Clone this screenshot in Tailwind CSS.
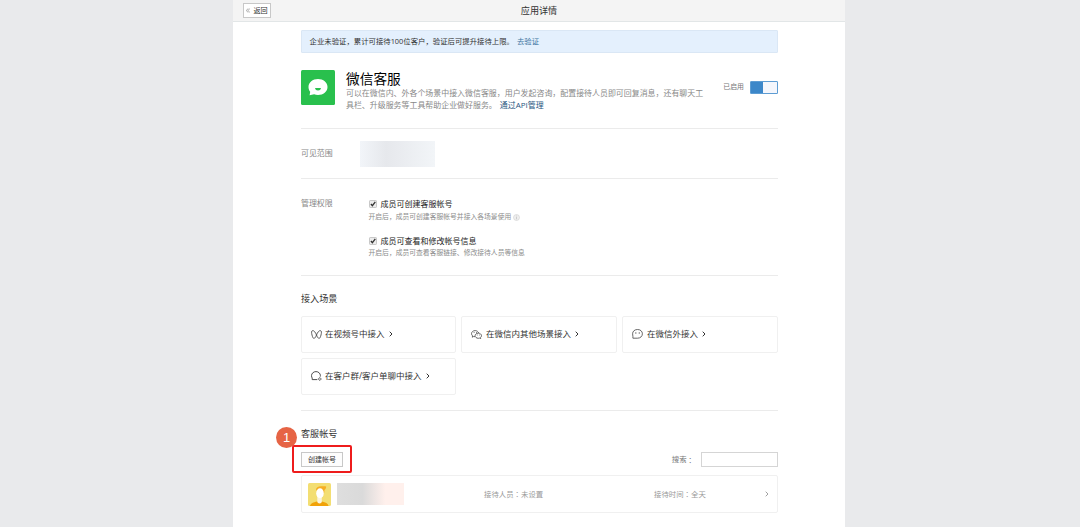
<!DOCTYPE html>
<html lang="zh-CN">
<head>
  <meta charset="UTF-8">
  <meta name="viewport" content="width=device-width, initial-scale=1.0">
  <title>应用详情</title>
  <script src="https://cdn.jsdelivr.net/npm/@tailwindcss/browser@4"></script>
</head>
<body class="bg-[#e9eaec] h-[527px] overflow-hidden font-['Open_Sans','Noto_Sans_CJK_SC',sans-serif] text-[#333]">
  <main class="ml-[233px] w-[612px] h-[527px] bg-white overflow-hidden">
    <!-- Top bar -->
    <header class="grid grid-cols-3 items-center h-[22px] bg-[#f4f4f4] border-b border-[#e2e6e7] px-[10px]">
      <button class="flex items-center justify-center gap-[3px] w-[28px] h-[15px] bg-white border border-[#c8c8c8] text-[7.1px] leading-none">
        <svg class="w-[4px] h-[5px]" viewBox="0 0 4 5" fill="none" stroke="#777" stroke-width=".6"><path d="M2 .5.5 2.5 2 4.5M3.7.5 2.2 2.5 3.7 4.5"/></svg>返回
      </button>
      <h1 class="text-center text-[9.1px] leading-none">应用详情</h1>
    </header>

    <div class="ml-[68px] w-[477px]">
      <!-- Notice -->
      <div class="flex items-center h-[23px] mt-2 pl-[7.5px] bg-[#e4f0fd] border border-[#dae7f5] rounded-[1px] text-[7.38px] leading-none whitespace-nowrap">
        <span>企业未验证，累计可接待100位客户，验证后可提升接待上限。</span>
        <a class="ml-[3px] text-[#3b73a0]">去验证</a>
      </div>

      <!-- App info -->
      <section class="flex h-[76px] pt-[17px] border-b border-[#ebebeb]">
        <svg class="w-[34px] h-[35px] shrink-0" viewBox="0 0 34 35" preserveAspectRatio="none">
          <rect width="34" height="35" rx="1.5" fill="#29c04d"/>
          <path d="M17 9c5.300 0 9.500 3.500 9.500 8s-4.200 8-9.500 8c-1.500 0-2.700-.2-3.900-.7L8.600 25.300l.6-3.500C8 20.500 7.500 18.800 7.500 17c0-4.500 4.200-8 9.500-8z" fill="#fff"/>
          <path d="M14 18h6c-.3 1.700-1.400 2.500-3 2.500s-2.700-.8-3-2.500z" fill="#29c04d"/>
        </svg>
        <div class="ml-[11px] w-[362px] whitespace-nowrap">
          <h2 class="mt-[2px] text-[13.7px] leading-[14px] text-black">微信客服</h2>
          <p class="mt-[2px] text-[7.95px] leading-[11.500px] text-[#888]">可以在微信内、外各个场景中接入微信客服，用户发起咨询，配置接待人员即可回复消息，还有聊天工<br>具栏、升级服务等工具帮助企业做好服务。<a class="ml-[3px] text-[#1f5580]">通过API管理</a></p>
        </div>
        <div class="ml-auto flex items-center h-[35px] gap-[6px]">
          <span class="text-[6.9px] leading-none text-[#777]">已启用</span>
          <span class="flex justify-end w-[28px] h-[13px] bg-[#3c87c9] border border-[#5d9cd3] rounded-[1px]"><span class="w-[14px] bg-[#f4f6fc]"></span></span>
        </div>
      </section>

      <!-- Visible range -->
      <section class="flex items-center h-[50px] border-b border-[#ebebeb]">
        <span class="w-[59px] text-[7.95px] leading-none text-[#888]">可见范围</span>
        <div class="w-[75px] h-[26px] bg-linear-to-r from-[#f2f5f9] via-[#e6e8ec] via-35% to-[#f2f5f8]"></div>
      </section>

      <!-- Permissions -->
      <section class="flex h-[97px] pt-[19px] border-b border-[#ebebeb] whitespace-nowrap">
        <span class="w-[67.5px] text-[7.95px] leading-[11px] text-[#888]">管理权限</span>
        <div>
          <div class="flex items-center h-[11px] gap-[4px]">
            <svg class="w-[8px] h-[8px]" viewBox="0 0 8 8" fill="none"><rect x=".5" y=".5" width="7" height="7" rx=".7" fill="#ececec" stroke="#bdbdbd" stroke-width=".8"/><path d="M1.900 4 3.400 5.700 6.300 1.900" stroke="#333" stroke-width="1.300"/></svg>
            <span class="text-[8px] leading-none text-[#222]">成员可创建客服帐号</span>
          </div>
          <div class="flex items-center h-[10px] mt-[3px] gap-[2px] text-[6.8px] leading-none text-[#8c8c8c]">
            开启后，成员可创建客服帐号并接入各场景使用
            <svg class="w-[7px] h-[7px]" viewBox="0 0 7 7"><circle cx="3.500" cy="3.500" r="3" fill="#eee" stroke="#d6d6d6" stroke-width=".7"/><path d="M3.500 1.600v.8M3.500 3v2.300" stroke="#c4c4c4" stroke-width=".8"/></svg>
          </div>
          <div class="flex items-center h-[11px] mt-[13px] gap-[4px]">
            <svg class="w-[8px] h-[8px]" viewBox="0 0 8 8" fill="none"><rect x=".5" y=".5" width="7" height="7" rx=".7" fill="#ececec" stroke="#bdbdbd" stroke-width=".8"/><path d="M1.900 4 3.400 5.700 6.300 1.900" stroke="#333" stroke-width="1.300"/></svg>
            <span class="text-[8px] leading-none text-[#222]">成员可查看和修改帐号信息</span>
          </div>
          <div class="flex items-center h-[10px] mt-[2px] text-[6.8px] leading-none text-[#8c8c8c]">开启后，成员可查看客服链接、修改接待人员等信息</div>
        </div>
      </section>

      <!-- Scenes -->
      <section class="h-[135px] pt-[18px] border-b border-[#ebebeb]">
        <h3 class="text-[9.1px] leading-[10px]">接入场景</h3>
        <div class="grid grid-cols-[155px_156px_156px] gap-x-[5px] gap-y-[5px] mt-[12px] text-[8.5px] leading-none whitespace-nowrap">
          <a class="flex items-center h-[37px] pl-[9px] border border-[#f0f0f0] rounded-[2px]">
            <svg class="w-[11px] h-[9px] mr-[3px]" viewBox="0 0 11 9" fill="none" stroke="#444" stroke-width=".85" stroke-linejoin="round"><path d="M5.500 5C4.500 2.400 3 .4 1.600.6.200.8.500 3 1 5c.5 2 1.100 3.400 1.900 3.400C3.900 8.400 4.800 6.800 5.500 5zM5.500 5C6.500 2.400 8 .4 9.400.6c1.400.2 1.100 2.400.6 4.400-.5 2-1.100 3.400-1.900 3.400C7.100 8.400 6.200 6.800 5.500 5z"/></svg>
            在视频号中接入
            <svg class="w-[4px] h-[6px] ml-[4px] mb-px" viewBox="0 0 4 6" fill="none" stroke="#333" stroke-width="1"><path d="m.7.700 2.300 2.300-2.300 2.300"/></svg>
          </a>
          <a class="flex items-center h-[37px] pl-[9px] border border-[#f0f0f0] rounded-[2px]">
            <svg class="w-[11px] h-[9px] mr-[4px]" viewBox="0 0 11 9" fill="none" stroke="#444" stroke-width=".8"><path d="M4 6.700c-.5 0-.9-.1-1.300-.2L1.300 7.200l.3-1.300C.9 5.300.5 4.500.5 3.700.500 2 2.100.6 4.100.6c1.700 0 3.200 1 3.500 2.400"/><path d="M7.300 3.200c1.800 0 3.200 1.100 3.200 2.500 0 .8-.4 1.400-1 1.900l.2 1-1.200-.5c-.4.1-.8.2-1.200.2-1.800 0-3.200-1.200-3.200-2.600s1.400-2.500 3.200-2.500z"/><path d="M2.700 2.500h.8M5 2.500h.8M5.900 5h.7M8 5h.7"/></svg>
            在微信内其他场景接入
            <svg class="w-[4px] h-[6px] ml-[4px] mb-px" viewBox="0 0 4 6" fill="none" stroke="#333" stroke-width="1"><path d="m.7.700 2.300 2.300-2.300 2.300"/></svg>
          </a>
          <a class="flex items-center h-[37px] pl-[9px] border border-[#f0f0f0] rounded-[2px]">
            <svg class="w-[11px] h-[10px] mr-[4px] mb-px" viewBox="0 0 11 10" fill="none" stroke="#444" stroke-width=".8"><path d="M5.500.5c2.900 0 4.900 1.800 4.900 4.300s-2 4.400-4.900 4.400H.9V7.400C.7 6.600.6 5.700.6 4.800.600 2.300 2.600.5 5.500.5z"/><path d="M3.200 4h1.200M6.700 4h1.200" stroke-width="1.200"/></svg>
            在微信外接入
            <svg class="w-[4px] h-[6px] ml-[4px] mb-px" viewBox="0 0 4 6" fill="none" stroke="#333" stroke-width="1"><path d="m.7.700 2.300 2.300-2.300 2.300"/></svg>
          </a>
          <a class="flex items-center h-[37px] pl-[9px] border border-[#f0f0f0] rounded-[2px]">
            <svg class="w-[11px] h-[10px] mr-[3px] mb-px" viewBox="0 0 11 10" fill="none" stroke="#444" stroke-width=".95"><path d="M6.300 8.600H1.200V7C.8 6.400.5 5.600.5 4.700.500 2.400 2.500.6 5 .6s4.400 1.800 4.400 4.100c0 .3 0 .6-.1.900"/><path d="m8.700 6.300.5 1.200 1.300.5-1.300.5-.5 1.200-.5-1.200L6.900 8l1.300-.5z" stroke-width=".6"/></svg>
            在客户群/客户单聊中接入
            <svg class="w-[4px] h-[6px] ml-[4px] mb-px" viewBox="0 0 4 6" fill="none" stroke="#333" stroke-width="1"><path d="m.7.700 2.300 2.300-2.300 2.300"/></svg>
          </a>
        </div>
      </section>

      <!-- Accounts -->
      <section class="pt-[18px]">
        <div class="relative">
          <h3 class="text-[9.1px] leading-[10px]">客服帐号</h3>
          <span class="absolute left-[-25px] top-[-2px] flex items-center justify-center size-[21px] rounded-full bg-[#e66445] text-white text-[13px] leading-none font-['Liberation_Sans',sans-serif]">1</span>
        </div>
        <div class="flex items-center justify-between h-[15px] mt-[13px] text-[7.4px] leading-none">
          <div class="relative">
            <button class="flex items-center justify-center w-[42px] h-[15px] border border-[#c8c8c8] bg-[#fdfdfd] text-[7px]">创建帐号</button>
            <span class="absolute -left-[9px] -top-[7px] w-[60px] h-[28px] border-2 border-[#ee1c1c] rounded-[2px]"></span>
          </div>
          <label class="flex items-center text-[#777]">搜索<span lang="ja" class="font-['Noto_Sans_CJK_JP',sans-serif]">：</span><input type="text" class="ml-[7px] w-[77px] h-[15px] border border-[#d5d5d5]"></label>
        </div>
        <div class="grid grid-cols-[176px_170px_1fr_auto] items-center h-[38px] mt-2 pl-[6px] pr-2 border border-[#f0f0f0] rounded-[2px] text-[7.4px] leading-none text-[#999]">
          <div class="flex items-center gap-[6px]">
            <svg class="w-[23px] h-[23px]" viewBox="0 0 23 23">
              <rect width="23" height="23" rx="1.500" fill="#f3de72"/>
              <path d="M2 23c.6-2.800 3.500-3.600 7-4.500h5c3.500.9 6 1.700 6.600 4.500z" fill="#f1a208"/>
              <path d="M8 7c0-2.500 2-3.700 5-3.700 1.500 0 3.700-.3 5.200.2-.1 1.800-.8 3-1.800 3.600.2 1.900-.3 3.900-1.400 4.900z" fill="#f6ae22"/>
              <path d="M9.300 13h4.500v5.300c0 3-4.500 3-4.500 0z" fill="#fbf4dc"/>
              <ellipse cx="12" cy="10.300" rx="3.800" ry="5" fill="#fff"/>
            </svg>
            <div class="w-[67px] h-[22px] bg-linear-to-r from-[#dedede] via-[#dadada] via-38% to-[#fff0ec] to-72%"></div>
          </div>
          <span>接待人员<span lang="ja" class="font-['Noto_Sans_CJK_JP',sans-serif]">：</span>未设置</span>
          <span>接待时间<span lang="ja" class="font-['Noto_Sans_CJK_JP',sans-serif]">：</span>全天</span>
          <svg class="w-[4px] h-[6px]" viewBox="0 0 4 6" fill="none" stroke="#888" stroke-width=".8"><path d="m.7.700 2.300 2.300-2.300 2.300"/></svg>
        </div>
      </section>
    </div>
  </main>
</body>
</html>
